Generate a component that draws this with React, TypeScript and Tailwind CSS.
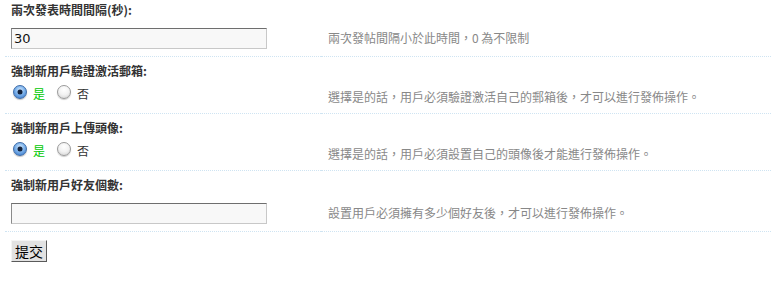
import React from "react";

const font = { fontFamily: '"Noto Sans CJK TC", "Noto Sans", sans-serif' };

function Radio({ checked }: { checked: boolean }) {
  return checked ? (
    <span className="relative inline-block w-[14px] h-[14px] rounded-full border border-[#3d6ba8] bg-[radial-gradient(circle_at_50%_35%,#d4e9ff_0%,#7fb4ec_45%,#2f6fc4_100%)] shadow-[0_1px_1px_rgba(0,0,0,0.25)]">
      <span className="absolute left-1/2 top-1/2 w-[5px] h-[5px] -translate-x-1/2 -translate-y-1/2 rounded-full bg-[#14233d]" />
    </span>
  ) : (
    <span className="inline-block w-[14px] h-[14px] rounded-full border border-[#9a9a9a] bg-[radial-gradient(circle_at_50%_30%,#ffffff_0%,#f2f2f2_50%,#cfcfcf_100%)] shadow-[0_1px_1px_rgba(0,0,0,0.2)]" />
  );
}

function Header({ text, first }: { text: string; first?: boolean }) {
  return (
    <div
      className={`col-span-2 pl-[6px] ${first ? "h-[19px] pt-[1px]" : "h-[24px] pt-[5px]"} text-[12px] leading-[18px] font-bold text-[#333]`}
    >
      {text}
    </div>
  );
}

function Input({ value }: { value?: string }) {
  return (
    <div
      className="w-[256px] h-[21px] border-t border-l border-t-[#6e6e6e] border-l-[#8a8a8a] border-r border-b border-r-[#c8c8c8] border-b-[#c8c8c8] bg-[#f8f8f8] pl-[2px] text-[13px] leading-[19px] text-[#111]"
      style={{ fontFamily: '"DejaVu Sans", sans-serif' }}
    >
      {value}
    </div>
  );
}

function Desc({ text }: { text: string }) {
  return (
    <div className="flex items-center pl-[7px] border-b border-dotted border-[#cfe4f2] text-[12px] leading-[18px] text-[#888]">
      {text}
    </div>
  );
}

function Radios() {
  return (
    <div className="flex items-center h-[18px] text-[12px] leading-[18px]">
      <span className="ml-[2px]">
        <Radio checked />
      </span>
      <span className="ml-[6px] text-[#00c800]">是</span>
      <span className="ml-[12px]">
        <Radio checked={false} />
      </span>
      <span className="ml-[6px] text-[#333]">否</span>
    </div>
  );
}

export default function App() {
  return (
    <div className="w-[772px] h-[302px] bg-white overflow-hidden" style={font}>
      <div className="ml-[5px] w-[766px] grid grid-cols-[316px_450px]">
        <Header text="兩次發表時間間隔(秒):" first />
        <div className="h-[38px] pl-[6px] pt-[9px] border-b border-dotted border-[#cfe4f2]">
          <Input value="30" />
        </div>
        <Desc text="兩次發帖間隔小於此時間，0 為不限制" />

        <Header text="強制新用戶驗證激活郵箱:" />
        <div className="h-[33px] pl-[6px] pt-[4px] border-b border-dotted border-[#cfe4f2]">
          <Radios />
        </div>
        <Desc text="選擇是的話，用戶必須驗證激活自己的郵箱後，才可以進行發佈操作。" />

        <Header text="強制新用戶上傳頭像:" />
        <div className="h-[33px] pl-[6px] pt-[4px] border-b border-dotted border-[#cfe4f2]">
          <Radios />
        </div>
        <Desc text="選擇是的話，用戶必須設置自己的頭像後才能進行發佈操作。" />

        <Header text="強制新用戶好友個數:" />
        <div className="h-[37px] pl-[6px] pt-[8px] border-b border-dotted border-[#cfe4f2]">
          <Input />
        </div>
        <Desc text="設置用戶必須擁有多少個好友後，才可以進行發佈操作。" />

        <div className="col-span-2 pl-[6px] pt-[8px]">
          <button className="w-[36px] h-[22px] bg-[#e2e2e2] border border-t-[#f4f4f4] border-l-[#f4f4f4] border-r-[#5a5a5a] border-b-[#5a5a5a] text-[14px] leading-[18px] text-black flex items-center justify-center">
            提交
          </button>
        </div>
      </div>
    </div>
  );
}
